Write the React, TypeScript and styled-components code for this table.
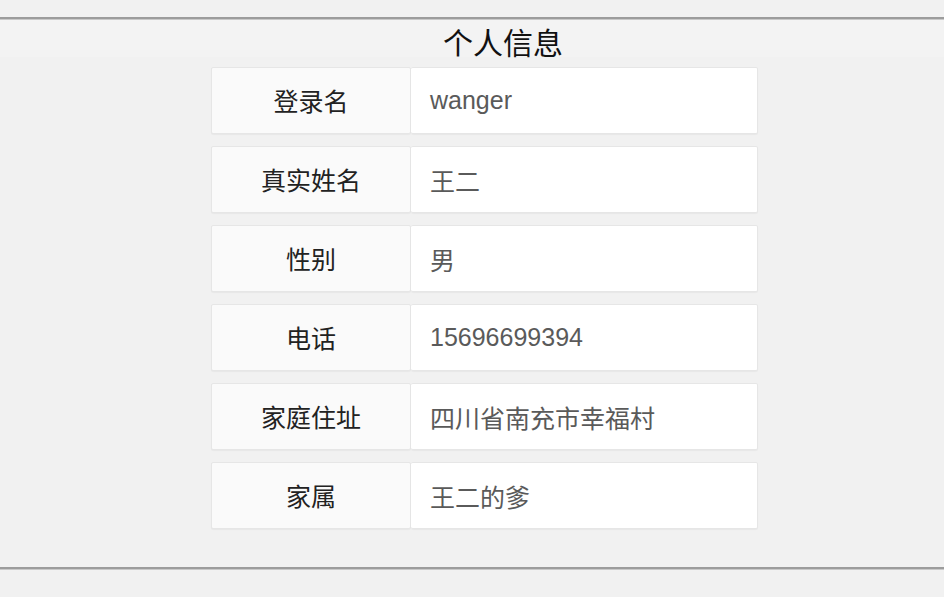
import React from "react";
import styled, { createGlobalStyle } from "styled-components";

const GlobalStyle = createGlobalStyle`
  html, body {
    margin: 0;
    padding: 0;
    background: #f1f1f1;
    font-family: "Liberation Sans", "Noto Sans CJK SC", sans-serif;
  }
`;

interface InfoRow {
  label: string;
  value: string;
}

const rows: InfoRow[] = [
  { label: "登录名", value: "wanger" },
  { label: "真实姓名", value: "王二" },
  { label: "性别", value: "男" },
  { label: "电话", value: "15696699394" },
  { label: "家庭住址", value: "四川省南充市幸福村" },
  { label: "家属", value: "王二的爹" },
];

const App: React.FC = () => {
  return (
    <Page>
      <GlobalStyle />
      <Rule />
      <Header>
        <Title>个人信息</Title>
      </Header>
      <Table>
        {rows.map((row) => (
          <Row key={row.label}>
            <Label>{row.label}</Label>
            <Value>{row.value}</Value>
          </Row>
        ))}
      </Table>
      <Rule />
    </Page>
  );
};

export default App;

const Page = styled.div`
  width: 944px;
  height: 597px;
  padding-top: 17px;
  box-sizing: border-box;
  overflow: hidden;
`;

const Rule = styled.div`
  height: 1px;
  border-top: 2px solid #9c9c9c;
  background: #c9c9c9;
`;

const Header = styled.div`
  height: 37px;
  box-sizing: border-box;
  padding-top: 9px;
  background: #f3f3f3;
  display: flex;
  justify-content: center;
  align-items: flex-start;
`;

const Title = styled.h1`
  margin: 0;
  padding-left: 62px;
  font-size: 30px;
  font-weight: 400;
  color: #111;
  line-height: 30px;
  height: 28px;
`;

const Table = styled.div`
  width: 547px;
  margin: 10px 0 38px 211px;
  display: flex;
  flex-direction: column;
  gap: 12px;
`;

const Row = styled.div`
  display: grid;
  grid-template-columns: 200px 1fr;
  height: 67px;
`;

const Cell = styled.div`
  display: flex;
  align-items: center;
  border: 1px solid #e6e6e6;
  border-radius: 2px;
  box-shadow: 0 1px 1px rgba(0, 0, 0, 0.04);
  font-size: 25px;
`;

const Label = styled(Cell)`
  justify-content: center;
  background: #fafafa;
  color: #222;
  padding-bottom: 2px;
`;

const Value = styled(Cell)`
  background: #fff;
  color: #5a5a5a;
  padding-left: 19px;
  border-left: none;
`;
